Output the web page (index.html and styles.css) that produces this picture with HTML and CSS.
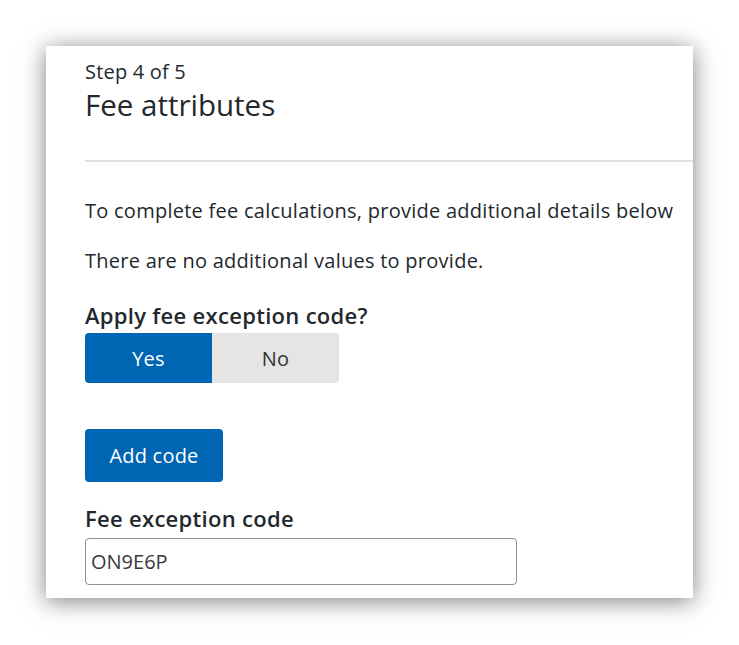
FILE: index.html
```html
<!DOCTYPE html>
<html lang="en">
<head>
<meta charset="utf-8">
<title>Fee attributes</title>
<link rel="stylesheet" href="styles.css">
</head>
<body>
<div class="card">
  <div class="step">Step 4 of 5</div>
  <h1 class="title">Fee attributes</h1>
  <hr class="divider">
  <p class="text first">To complete fee calculations, provide additional details below</p>
  <p class="text second">There are no additional values to provide.</p>
  <div class="label apply-label">Apply fee exception code?</div>
  <div class="toggle">
    <button class="toggle-btn active">Yes</button>
    <button class="toggle-btn">No</button>
  </div>
  <button class="primary">Add code</button>
  <label class="label code-label" for="code">Fee exception code</label>
  <input class="input" id="code" type="text" value="ON9E6P">
</div>
</body>
</html>
```

FILE: styles.css
```css
html, body {
  margin: 0;
  padding: 0;
  background: #ffffff;
  min-height: 645px;
}
body {
  font-family: "Open Sans", "DejaVu Sans", sans-serif;
  color: #23282c;
  padding-top: 46px;
  box-sizing: border-box;
}
.card {
  margin: 0 0 0 46px;
  width: 647px;
  height: 552px;
  background: #fff;
  box-shadow: 0 3px 22px rgba(0, 0, 0, 0.5);
  padding: 14px 0 0 39px;
  box-sizing: border-box;
  overflow: hidden;
  display: flex;
  flex-direction: column;
  align-items: flex-start;
}
.step {
  font-size: 20px;
  line-height: 24px;
  letter-spacing: 0.2px;
}
.title {
  margin: 4px 0 0;
  font-size: 29.5px;
  line-height: 34px;
  font-weight: 400;
}
.divider {
  align-self: stretch;
  margin: 38px 0 0;
  border: 0;
  border-top: 2px solid #e0e0e0;
  height: 0;
}
.text {
  margin: 0;
  font-size: 20px;
  line-height: 30px;
  letter-spacing: 0.26px;
  white-space: nowrap;
}
.text.first { margin-top: 34px; }
.text.second { margin-top: 20px; }
.label {
  font-size: 22px;
  line-height: 28px;
  font-weight: 600;
  letter-spacing: 0.3px;
}
.apply-label { margin-top: 25px; }
.toggle {
  margin-top: 4px;
  display: flex;
  border-radius: 4px;
  overflow: hidden;
}
.toggle-btn {
  width: 127px;
  height: 50px;
  border: 0;
  margin: 0;
  padding: 0;
  font-family: inherit;
  font-size: 20px;
  letter-spacing: 0.2px;
  background: #e5e5e5;
  color: #333;
}
.toggle-btn.active {
  background: #0066b3;
  color: #fff;
}
.primary {
  margin-top: 46px;
  width: 138px;
  height: 53px;
  border: 0;
  border-radius: 4px;
  background: #0066b3;
  color: #fff;
  font-family: inherit;
  font-size: 20px;
  letter-spacing: 0.2px;
  padding: 0;
}
.code-label { margin-top: 22px; }
.input {
  margin-top: 6px;
  width: 432px;
  height: 47px;
  box-sizing: border-box;
  border: 1px solid #8f8f8f;
  border-radius: 4px;
  padding: 0 5px;
  font-family: inherit;
  font-size: 20px;
  color: #3a3a3a;
}
```
